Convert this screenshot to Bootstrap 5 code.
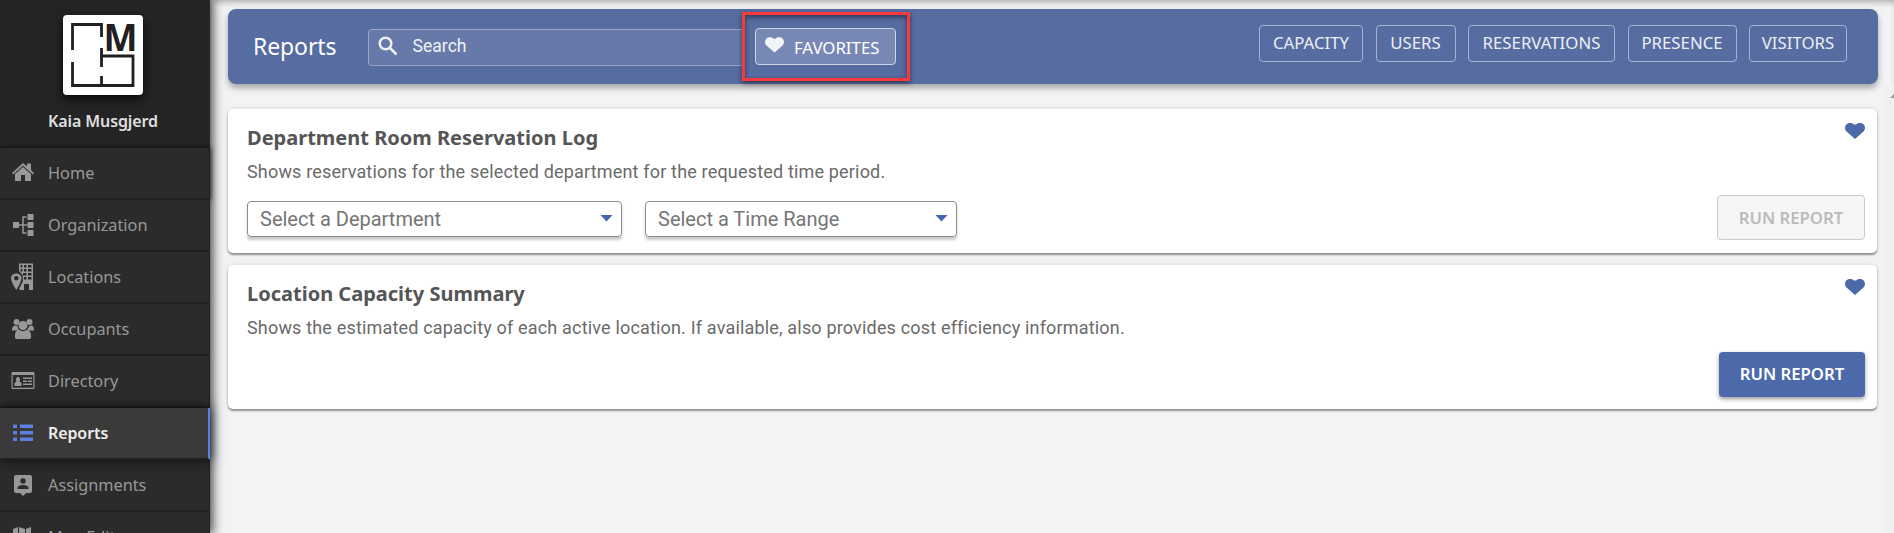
<!DOCTYPE html>
<html lang="en">
<head>
<meta charset="utf-8">
<title>Reports</title>
<meta name="viewport" content="width=device-width, initial-scale=1">
<link href="https://cdn.jsdelivr.net/npm/bootstrap@5.3.0/dist/css/bootstrap.min.css" rel="stylesheet">
<style>
body{font-family:"Noto Sans",sans-serif;background:#f2f3f5;height:533px;overflow:hidden}
.app-shell{height:533px;overflow:hidden}
.side-panel{width:210px;background:#242424;box-shadow:2px 0 10px 1px rgba(0,0,0,.7);z-index:2}
.profile-box{height:148px;padding-top:15px}
.logo-tile{width:80px;height:80px;border-radius:4px;background:#fff;box-shadow:0 4px 10px rgba(0,0,0,.8);margin-right:4px}
.logo-tile svg{overflow:visible;display:block}
.user-name{color:#e0e0e0;font-size:16px;font-weight:600;line-height:24px;margin-top:14px;padding-right:4px;letter-spacing:-.1px}
.side-link{height:52px;border-bottom:2px solid #202020;border-right:1px solid #202020;background:#2b2b2b;color:#989898;font-size:16.3px;line-height:24px;flex:none}
.side-link:first-child{box-shadow:0 0 5px #111}
.side-link svg{width:24px;height:30px;margin:0 13px 0 11px;fill:#989898;flex:none}
.side-link.current{background:#3a3a3a;color:#eee;font-weight:600;font-size:16px;border-right:2px solid #5b80e0;box-shadow:0 0 12px rgba(0,0,0,.75);position:relative;z-index:1;letter-spacing:-.1px}
.side-link.current svg{fill:#5b80e0}
.main-area{padding:9px 16px 0 18px;box-shadow:inset 0 5px 6px -3px rgba(0,0,0,.3);position:relative}
.top-bar{height:75px;border-radius:8px;background:#576ca0;box-shadow:0 4px 6px rgba(0,0,0,.32);padding-left:25px;padding-right:31px;color:#fff}
.page-title{font-size:23px;line-height:32px;width:115px;font-weight:400;letter-spacing:-.1px;padding-bottom:2px}
.search-field{width:386px;height:37px;border:1px solid #9aa7c8;border-radius:4px;background:#6779a9;font-family:Roboto,sans-serif;font-size:17.6px;color:#eff1f6;margin-top:1px;padding-bottom:1px}
.callout-frame{width:168px;height:69px;border:3px solid #f8393d;margin-left:-12px;padding:13px 10px;box-shadow:0 2px 5px rgba(0,0,0,.5),inset 0 2px 5px rgba(0,0,0,.5);background:#576ca0}
.bar-btn{height:37px;border:1px solid #a9b4d1;border-radius:4px;color:#eceff6;font-size:16.8px;line-height:24px;padding:5px 0 0;text-align:center}
.bar-tabs{gap:12.5px;margin-bottom:7px}
.bar-tabs .bar-btn{padding:0 0 2px;line-height:33px}
.fav-btn{width:141px;background:#7888b5;border-color:#cdd4e6;color:#fff;padding:2px 0 0 9px}
.report-card{height:144px;background:#fff;border-radius:5px;box-shadow:0 2px 2px rgba(0,0,0,.38),0 0 4px rgba(0,0,0,.13);margin-right:1px;padding:16px 12px 12px 19px}
.report-title{font-family:"Noto Sans",sans-serif;font-weight:700;font-size:20px;line-height:26px;color:#555;margin:0}
.report-text{font-family:Roboto,sans-serif;font-size:18px;line-height:24px;color:#6a6a6a;margin-top:9px;letter-spacing:.175px}
.pick-box{height:36px;border:1px solid #8c8c8c;border-radius:4px;box-shadow:0 3px 3px rgba(0,0,0,.22);font-family:Roboto,sans-serif;font-size:20px;color:#757575;padding:0 8px 1px 12px}
.arrow-down{width:13px;height:7px;background:#4866ad;clip-path:polygon(0 0,100% 0,50% 100%);margin-top:-1px}
.run-btn{width:146px;height:45px;border-radius:4px;background:#4c69aa;color:#fff;font-weight:600;font-size:16.7px;line-height:24px;border:0;padding:0 0 2px;box-shadow:0 2px 4px rgba(0,0,0,.4)}
.run-btn:disabled{width:148px;background:#f6f6f6;border:1px solid #ccc;color:#bbb;opacity:1;box-shadow:none;margin-bottom:1px;padding-bottom:0}
.card-heart{width:20px;height:16px;fill:#4c69aa;margin-top:-2px}
.scroll-rail{position:absolute;right:0;top:84px;width:10px;bottom:0;background:#f0f0f0;overflow:hidden}
.scroll-rail svg{position:absolute;left:6px;top:9px}
</style>
</head>
<body>
<svg width="0" height="0" class="position-absolute"><symbol id="heart" viewBox="0 0 20 16"><path d="M10 16 1.800 8.800C-.4 6.800-.5 3.300 1.300 1.400 3.300-.6 7.300-.5 9 1.400h2C12.700-.5 16.700-.6 18.700 1.400c1.800 1.900 1.700 5.400-.5 7.400z"/></symbol></svg>
<div class="app-shell d-flex">
<aside class="side-panel d-flex flex-column flex-shrink-0 position-relative">
  <div class="profile-box flex-shrink-0 d-flex flex-column align-items-center">
    <div class="logo-tile">
      <svg width="80" height="80" viewBox="0 0 80 80"><g fill="none" stroke="#231f20" stroke-width="2.800"><path d="M9.500 35V9.500h29V22M9.500 47v23.500H70V41H38.500M38.500 33v19M38.500 61v9"/></g><text x="40.500" y="36" font-family="Open Sans,sans-serif" font-weight="700" font-size="37.500" textLength="34" lengthAdjust="spacingAndGlyphs" fill="#231f20">M</text></svg>
    </div>
    <div class="user-name">Kaia Musgjerd</div>
  </div>
  <nav class="d-flex flex-column">
    <a class="side-link d-flex align-items-center text-decoration-none"><svg viewBox="0 0 24 30"><path d="M1 15 12 5l4 3.500V5.500h4V12l3 3-1 1.500L12 7.800 2 16.500zM4 16l8-7 8 7v7h-6v-6h-4v6H4z"/></svg>Home</a>
    <a class="side-link d-flex align-items-center text-decoration-none"><svg viewBox="0 0 24 30"><path d="M2 12h6v6H2zM16.500 4h6v6h-6zM16.500 12h6v6h-6zM16.500 20h6v6h-6z"/><path d="M8 15h8.500M15.500 7H12v16h3.500" fill="none" stroke="#989898" stroke-width="1.500"/></svg>Organization</a>
    <a class="side-link d-flex align-items-center text-decoration-none"><svg viewBox="0 0 24 30"><path fill-rule="evenodd" d="M0 16a5.300 5.300 0 0 1 10.500 0c0 4-5.200 12-5.200 12S0 20 0 16zm5.300-2a2.300 2.300 0 1 0 0 4.600 2.300 2.300 0 0 0 0-4.600z"/><path fill-rule="evenodd" d="M8 1.500h14V28h-4v-6h-5v6H9l-1-1 4-8-.5-6L8 9zM9.500 3v2.500h2V3zm3.500 0v2.500h2.500V3zm4 0v2.500h3.500V3zM9.500 7v2.500h2V7zM13 7v2.500h2.500V7zm4 0v2.500h3.500V7zm-5 4v2.500h3.500V11zm5 0v2.500h3.500V11zm-4 4v2.500h2.500V15zm4 0v2.500h3.500V15z"/></svg>Locations</a>
    <a class="side-link d-flex align-items-center text-decoration-none"><svg viewBox="0 0 24 30"><circle cx="5.500" cy="8" r="3"/><circle cx="18.500" cy="8" r="3"/><circle cx="12" cy="11.500" r="4.500"/><path d="M1 16c0-3 1-4.500 4-4.500 1 0 1 .5 1.500 1L8 16.500H1zM16 16.500l2-4c1-1 1.500-1 2-1 2.500 0 3 2 3 5zM4 24v-3c0-3.500 2-5 4.500-5 2 1.500 5 1.500 7 0 2.500 0 4.500 1.500 4.500 5v3q-1 1-2 1H6q-1.500 0-2-1z"/></svg>Occupants</a>
    <a class="side-link d-flex align-items-center text-decoration-none"><svg viewBox="0 0 24 30"><path fill-rule="evenodd" d="M1.500 6h21q1 0 1 1v15q0 1-1 1h-21q-1 0-1-1V7q0-1 1-1zm.2 3v12.800h20.600V9z"/><path d="M3.500 20v-3l2-1.500c-1-2-.5-4.500 1.500-4.500s2.500 2.500 1.500 4.500l2 1.500v3zM12 11.500h9V13h-9zM12 14.500h4V16h-4zM17 14.500h4V16h-4zM12 17.500h9V19h-9z"/></svg>Directory</a>
    <a class="side-link current d-flex align-items-center text-decoration-none"><svg viewBox="0 0 24 30"><path d="M2 6.500h4V10H2zM9 6.500h13V10H9zM2 13h4v3.500H2zM9 13h13v3.500H9zM2 19.500h4V23H2zM9 19.500h13V23H9z"/></svg>Reports</a>
    <a class="side-link d-flex align-items-center text-decoration-none"><svg viewBox="0 0 24 30"><path fill-rule="evenodd" d="M5 5h14q2 0 2 2v14q0 2-2 2h-4l-3 3-3-3H5q-2 0-2-2V7q0-2 2-2zm7 3.300a2.700 2.700 0 1 0 0 5.400 2.700 2.700 0 0 0 0-5.400zM6.500 19h11v-1c0-4-11-4-11 0z"/></svg>Assignments</a>
    <a class="side-link d-flex align-items-center text-decoration-none"><svg viewBox="0 0 24 30"><path d="m2 7 5-2v18l-5 2zM8 5l6 2v18l-6-2zM15 7l5-2v18l-5 2z"/></svg>Map Editor</a>
  </nav>
</aside>
<main class="main-area flex-grow-1">
  <header class="top-bar d-flex align-items-center">
    <h1 class="page-title mb-0">Reports</h1>
    <div class="search-field d-flex align-items-center flex-shrink-0"><svg width="20" height="20" viewBox="0 0 20 20" style="margin:-2px 14.5px 0 9px"><g fill="none" stroke="#eff1f6" stroke-width="2.500"><circle cx="7.500" cy="7.500" r="5.800"/><path d="m12 12 6.500 6.500"/></g></svg>Search</div>
    <div class="callout-frame flex-shrink-0 position-relative"><button class="btn bar-btn fav-btn d-flex align-items-center"><svg width="19" height="16" style="margin:-5px 10px 0 0" fill="#f2f4f9"><use href="#heart"/></svg>FAVORITES</button></div>
    <div class="bar-tabs d-flex ms-auto">
      <button class="btn bar-btn" style="width:104px">CAPACITY</button>
      <button class="btn bar-btn" style="width:80px">USERS</button>
      <button class="btn bar-btn" style="width:147px">RESERVATIONS</button>
      <button class="btn bar-btn" style="width:109px">PRESENCE</button>
      <button class="btn bar-btn" style="width:98px">VISITORS</button>
    </div>
  </header>
  <section class="report-card d-flex justify-content-between" style="margin-top:25px">
    <div>
      <h2 class="report-title">Department Room Reservation Log</h2>
      <div class="report-text">Shows reservations for the selected department for the requested time period.</div>
      <div class="d-flex" style="gap:23px;margin-top:17px">
        <div class="pick-box d-flex align-items-center justify-content-between" style="width:375px">Select a Department<span class="arrow-down"></span></div>
        <div class="pick-box d-flex align-items-center justify-content-between" style="width:312px">Select a Time Range<span class="arrow-down"></span></div>
      </div>
    </div>
    <div class="d-flex flex-column align-items-end justify-content-between"><svg class="card-heart"><use href="#heart"/></svg><button class="btn run-btn" disabled>RUN REPORT</button></div>
  </section>
  <section class="report-card d-flex justify-content-between" style="margin-top:12px">
    <div>
      <h2 class="report-title">Location Capacity Summary</h2>
      <div class="report-text">Shows the estimated capacity of each active location. If available, also provides cost efficiency information.</div>
    </div>
    <div class="d-flex flex-column align-items-end justify-content-between"><svg class="card-heart"><use href="#heart"/></svg><button class="btn run-btn">RUN REPORT</button></div>
  </section>
  <div class="scroll-rail"><svg width="10" height="5"><path d="M0 5 5 0l5 5z" fill="#999"/></svg></div>
</main>
</div>
<script src="https://cdn.jsdelivr.net/npm/bootstrap@5.3.0/dist/js/bootstrap.bundle.min.js"></script>
</body>
</html>
